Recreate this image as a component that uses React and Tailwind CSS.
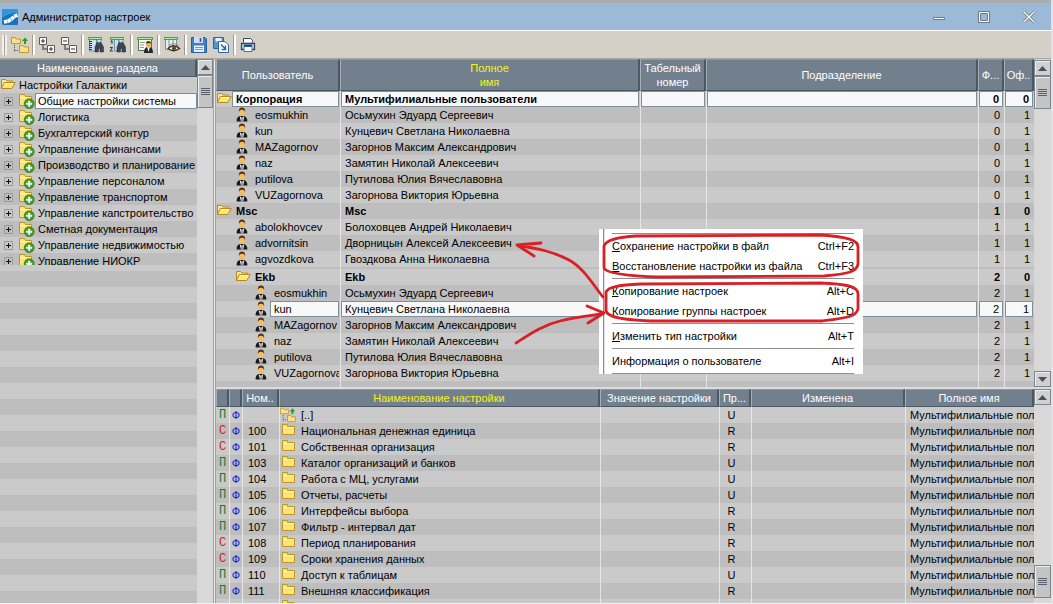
import React from "react";
import clsx from "clsx";

const sections = [
  "Общие настройки системы",
  "Логистика",
  "Бухгалтерский контур",
  "Управление финансами",
  "Производство и планирование",
  "Управление персоналом",
  "Управление транспортом",
  "Управление капстроительство",
  "Сметная документация",
  "Управление недвижимостью",
  "Управление НИОКР",
];

const users = [
  { level: 0, group: true, login: "Корпорация", name: "Мультифилиальные пользователи", f: 0, o: 0, selected: true },
  { level: 1, login: "eosmukhin", name: "Осьмухин Эдуард Сергеевич", f: 0, o: 1 },
  { level: 1, login: "kun", name: "Кунцевич Светлана Николаевна", f: 0, o: 1 },
  { level: 1, login: "MAZagornov", name: "Загорнов Максим Александрович", f: 0, o: 1 },
  { level: 1, login: "naz", name: "Замятин Николай Алексеевич", f: 0, o: 1 },
  { level: 1, login: "putilova", name: "Путилова Юлия Вячеславовна", f: 0, o: 1 },
  { level: 1, login: "VUZagornova", name: "Загорнова Виктория Юрьевна", f: 0, o: 1 },
  { level: 0, group: true, login: "Msc", name: "Msc", f: 1, o: 0 },
  { level: 1, login: "abolokhovcev", name: "Болоховцев Андрей Николаевич", f: 1, o: 1 },
  { level: 1, login: "advornitsin", name: "Дворницын Алексей Алексеевич", f: 1, o: 1 },
  { level: 1, login: "agvozdkova", name: "Гвоздкова Анна Николаевна", f: 1, o: 1 },
];

const branchUsers = [
  { level: 1, group: true, login: "Ekb", name: "Ekb", f: 2, o: 0 },
  { level: 2, login: "eosmukhin", name: "Осьмухин Эдуард Сергеевич", f: 2, o: 1 },
  { level: 2, login: "kun", name: "Кунцевич Светлана Николаевна", f: 2, o: 1, selected: true },
  { level: 2, login: "MAZagornov", name: "Загорнов Максим Александрович", f: 2, o: 1 },
  { level: 2, login: "naz", name: "Замятин Николай Алексеевич", f: 2, o: 1 },
  { level: 2, login: "putilova", name: "Путилова Юлия Вячеславовна", f: 2, o: 1 },
  { level: 2, login: "VUZagornova", name: "Загорнова Виктория Юрьевна", f: 2, o: 1 },
];

const settings = [
  ["П", "", "[..]", "U"],
  ["С", "100", "Национальная денежная единица", "R"],
  ["С", "101", "Собственная организация", "R"],
  ["П", "103", "Каталог организаций и банков", "U"],
  ["П", "104", "Работа с МЦ, услугами", "U"],
  ["П", "105", "Отчеты, расчеты", "U"],
  ["П", "106", "Интерфейсы выбора", "R"],
  ["П", "107", "Фильтр - интервал дат", "R"],
  ["С", "108", "Период планирования", "R"],
  ["С", "109", "Сроки хранения данных", "R"],
  ["П", "110", "Доступ к таблицам", "U"],
  ["П", "111", "Внешняя классификация", "R"],
];

function Logo() {
  return (
    <svg className="size-4 shrink-0" viewBox="0 0 16 16">
      <rect width="16" height="16" rx="1.5" fill="#1873bb" />
      <path d="M0 2Q0 0 2 0H14Q16 0 16 2V4Q7 4 0 9Z" fill="#3197dc" />
      <path d="M2 13 6 12.2 9.5 10 12 7.5 15.5 6" fill="none" stroke="#fff" strokeWidth="3.6" strokeDasharray="3.5 .5" />
    </svg>
  );
}

function OpenFolder() {
  return (
    <svg className="size-4 shrink-0" viewBox="0 0 16 16">
      <path d="M1.5 11V2.5H5.5L7 4H12.5V6" fill="#f7e9a0" stroke="#b88a1c" />
      <path d="M1.5 11.5 4.2 5.5H15.2L11.8 11.5Z" fill="#ffe778" stroke="#b88a1c" />
      <path d="M5 6.5H13.5" stroke="#fff7c4" />
    </svg>
  );
}

function Folder() {
  return (
    <svg className="size-4 shrink-0" viewBox="0 0 16 16">
      <path d="M2.5 1.5H7.5V3.5H14.5V11.5H2.5Z" fill="#fbe47c" stroke="#c39422" />
      <path d="M3 4.5H14" stroke="#fff8cf" />
    </svg>
  );
}

function FolderPlus() {
  return (
    <svg className="size-4 shrink-0" viewBox="0 0 16 16">
      <path d="M.5 1.5H5.5L6.5 3.5H12.5V12.5H.5Z" fill="#fbe47c" stroke="#c39422" />
      <path d="M1.5 4.5H11.5" stroke="#fff8cf" />
      <circle cx="10.2" cy="10.7" r="5" fill="#409b20" stroke="#2c7811" strokeWidth=".6" />
      <path d="M10.2 7.7V13.7M7.2 10.7H13.2" stroke="#fff" strokeWidth="2" />
    </svg>
  );
}

function FolderUp({ className }) {
  return (
    <svg className={className} viewBox="0 0 18 18">
      <path d="M.5 1.5H4L5 3H9.5V7.5H.5ZM8.5 9.5H12L13 11H17.5V16.5H8.5Z" fill="#fbe08a" stroke="#c9962c" />
      <path d="M3.5 9V16M3.5 14.5H8" fill="none" stroke="#444" strokeDasharray="1 1.2" />
      <path d="M14 8V4" stroke="#2f9a1c" strokeWidth="2" />
      <path d="M11 5 14 1.5 17 5Z" fill="#2f9a1c" />
    </svg>
  );
}

function UserIcon() {
  return (
    <svg className="size-4 shrink-0" viewBox="0 0 16 16">
      <path d="M1.6 14.5Q1.4 10 4.5 9H9Q12.4 10 12.4 14.5Z" fill="#17191c" />
      <path d="M4.6 9 7 11 9.2 9 8.2 14.5H6Z" fill="#fff" />
      <path d="M6.5 10.5H7.5L7.9 14.5H6.1Z" fill="#6d7986" />
      <ellipse cx="7" cy="5.2" rx="3" ry="3.9" fill="#f0bd69" />
      <path d="M3.8 5Q3.6 .6 7 .6T10.2 5Q9.4 2.7 7 2.8T3.8 5Z" fill="#5a3514" />
    </svg>
  );
}

function Binoculars() {
  return (
    <path
      d="M8 16V11L10 6.5H11.5V9H12.5V6.5H14L16.5 11V16H13V12.5H11.5V16Z"
      fill="#3d4650"
      stroke="#20262c"
      strokeWidth=".5"
    />
  );
}

const tools = [
  { label: "Вверх", sep: true, icon: <FolderUp className="size-[18px]" /> },
  {
    label: "Развернуть",
    icon: (
      <svg className="size-[18px]" viewBox="0 0 18 18" fill="#fff" stroke="#5b5b5b">
        <path d="M1.5 1.5H8.5V8.5H1.5ZM9.5 9.5H16.5V16.5H9.5Z" />
        <path d="M3 5H7M5 3V7M11 13H15M13 11V15M5 9V14M6 13H9" stroke="#333" />
      </svg>
    ),
  },
  {
    label: "Свернуть",
    sep: true,
    icon: (
      <svg className="size-[18px]" viewBox="0 0 18 18" fill="#fff" stroke="#5b5b5b">
        <path d="M1.5 1.5H8.5V8.5H1.5ZM9.5 9.5H16.5V16.5H9.5Z" />
        <path d="M3 5H7M11 13H15M5 9V14M6 13H9" stroke="#333" />
      </svg>
    ),
  },
  {
    label: "Найти",
    icon: (
      <svg className="size-[18px]" viewBox="0 0 18 18">
        <path d="M2.5 3V15H9.5V3M10 3V8H14V3" fill="#c9def3" stroke="#6d91b7" />
        <path d="M2 5.5H5M2 7.5H5M2 9.5H5M2 11.5H5M2 13.5H5" stroke="#333" />
        <path d="M1.5 1.5H14.5V3.5H1.5Z" fill="#b6f29c" stroke="#43a52b" />
        <Binoculars />
      </svg>
    ),
  },
  {
    label: "Найти далее",
    sep: true,
    icon: (
      <svg className="size-[18px]" viewBox="0 0 18 18">
        <path d="M5.5 4V15H9.5V4M10 3V8H14V3" fill="#c9def3" stroke="#6d91b7" />
        <path d="M1.5 5.5 3 4.5V8M1 11.5H3.5L1 15H4" fill="none" stroke="#333" />
        <path d="M1.5 1.5H14.5V3.5H1.5Z" fill="#b6f29c" stroke="#43a52b" />
        <Binoculars />
      </svg>
    ),
  },
  {
    label: "Пользователь",
    sep: true,
    icon: (
      <svg className="size-[18px]" viewBox="0 0 18 18">
        <path d="M2.5 3H15.5V14.5H2.5Z" fill="#f8fbf6" stroke="#52764b" />
        <path d="M1.5 1.5H16.5V3.5H1.5Z" fill="#b6f29c" stroke="#43a52b" />
        <path d="M4 6.5H9M4 9H8M4 11.5H8" stroke="#8e989b" />
        <path d="M8 17Q8 12 11 11H14Q17 12 17 17Z" fill="#23262b" />
        <path d="M11 11 12.5 16 14 11Z" fill="#fff" />
        <ellipse cx="12.5" cy="8.4" rx="2.5" ry="3" fill="#e7af5c" />
        <path d="M10 7.5Q10 5 12.5 5T15 7.5Q13 6.3 10 7.5" fill="#54310e" />
      </svg>
    ),
  },
  {
    label: "Просмотр",
    sep: true,
    icon: (
      <svg className="size-[18px]" viewBox="0 0 18 18">
        <path d="M2.5 3V13.5H13.5V3M6 3V13M10 3V13" fill="#e5f0fb" stroke="#6d91b7" />
        <path d="M1.5 1.5H14.5V3.5H1.5Z" fill="#b6f29c" stroke="#43a52b" />
        <path d="M5 12.5Q10.5 7 16.5 12.5Q10.5 17 5 12.5Z" fill="#fff" stroke="#42311b" strokeWidth="1.4" />
        <circle cx="11" cy="12.3" r="2.1" fill="#604425" />
        <path d="M6 9.5Q11 5.5 16 10" fill="none" stroke="#b28854" />
      </svg>
    ),
  },
  {
    label: "Сохранить",
    icon: (
      <svg className="size-[18px]" viewBox="0 0 18 18">
        <path d="M1.5 1.5H15L16.5 3V16.5H1.5Z" fill="#3f80c4" stroke="#245f9e" />
        <path d="M4 1H13V7H4Z" fill="#cfdff0" />
        <path d="M4 9.5H14V16H4Z" fill="#e9f1fa" />
        <path d="M10.5 2V6" stroke="#2f5d92" strokeWidth="1.6" />
        <path d="M5 11.5H13M5 13.5H13" stroke="#7b96b3" />
      </svg>
    ),
  },
  {
    label: "Копировать",
    sep: true,
    icon: (
      <svg className="size-[18px]" viewBox="0 0 18 18">
        <path d="M1.5 1.5H11.5V12.5H1.5Z" fill="#5794d3" stroke="#2867a6" />
        <path d="M3.5 2H9.5V5.5H3.5Z" fill="#e9f1fa" />
        <path d="M6.5 5.5H13L16.5 9V16.5H6.5Z" fill="#fff" stroke="#2867a6" />
        <path d="M9 8.5 13.5 13M13.5 9.5V13.5H9.5" fill="none" stroke="#2867a6" strokeWidth="1.5" />
      </svg>
    ),
  },
  {
    label: "Печать",
    icon: (
      <svg className="size-[18px]" viewBox="0 0 18 18">
        <path d="M4.5 6.5V2.5H11.5L13.5 4.5V6.5" fill="#fff" stroke="#33475c" />
        <path d="M2.5 7.5H15.5V13.5H2.5Z" fill="#c6d6e8" stroke="#33475c" strokeWidth="1.3" />
        <path d="M5 10.5H13V15.5H5Z" fill="#fff" stroke="#2a78c8" />
        <path d="M5 9.5H13" stroke="#243345" strokeWidth="1.5" />
      </svg>
    ),
  },
];

function ScrollButton({ down }) {
  return (
    <button
      aria-label={down ? "Прокрутить вниз" : "Прокрутить вверх"}
      className="flex h-4 w-full shrink-0 items-center justify-center border border-[#7d8690] bg-[#d0d0d0] shadow-[inset_1px_1px_0_#eeeeee]"
    >
      <svg className="h-[5px] w-[9px]" viewBox="0 0 9 5" fill="#48525d">
        <path d={down ? "M0 0H9L4.5 5Z" : "M0 5H9L4.5 0Z"} />
      </svg>
    </button>
  );
}

function Thumb() {
  return (
    <div className="flex h-[33px] w-full shrink-0 items-center justify-center border border-[#7d8690] bg-[#c4c4c4] shadow-[inset_1px_1px_0_#eeeeee]">
      <svg className="h-2 w-[9px]" viewBox="0 0 9 8" stroke="#58616b">
        <path d="M0 .5H9M0 2.5H9M0 4.5H9M0 6.5H9" />
      </svg>
    </div>
  );
}

function Th({ children, className }) {
  return (
    <th
      scope="col"
      className={clsx(
        "overflow-hidden border-t border-r-2 border-b border-l border-t-[#8f9aa5] border-r-[#4b5865] border-b-[#4b5865] border-l-[#a5adb6] bg-[#727f8d] p-0 font-normal whitespace-nowrap",
        className
      )}
    >
      {children}
    </th>
  );
}

const cell = "h-4 overflow-hidden border-l border-[#e6e6e6] p-0 leading-4 whitespace-nowrap";
const box = "mr-px h-4 overflow-hidden border border-[#7f8c9a] bg-[#f8f8f8] leading-[14px]";

function UserRow({ user }) {
  const plain = "h-4 overflow-hidden border border-transparent leading-[14px]";
  const inner = user.selected ? box : plain;
  return (
    <tr className={clsx("odd:bg-[#cacaca] even:bg-[#bebebe]", user.group && "font-bold")}>
      <td className="h-4 overflow-hidden p-0 whitespace-nowrap">
        <div className={clsx("flex", user.level === 1 && "pl-[19px]", user.level === 2 && "pl-[38px]")}>
          {user.group ? <OpenFolder /> : <UserIcon />}
          <div className={clsx(inner, "min-w-0 flex-1 pl-[3px]")}>{user.login}</div>
        </div>
      </td>
      <td className={cell}>
        <div className={clsx(inner, "pl-[3px]")}>{user.name}</div>
      </td>
      <td className={cell}>
        <div className={inner} />
      </td>
      <td className={cell}>
        <div className={inner} />
      </td>
      <td className={cell}>
        <div className={clsx(inner, "pr-[3px] text-right")}>{user.f}</div>
      </td>
      <td className={cell}>
        <div className={clsx(inner, "pr-[3px] text-right")}>{user.o}</div>
      </td>
    </tr>
  );
}

function GapRow({ className }) {
  return (
    <tr className="bg-[#bebebe]">
      <td className={clsx("p-0", className)} />
      {[1, 2, 3, 4, 5].map((i) => (
        <td key={i} className="border-l border-[#e6e6e6] p-0" />
      ))}
    </tr>
  );
}

function UserTable() {
  return (
    <table className="w-full table-fixed border-separate border-spacing-0">
      <colgroup>
        <col className="w-[124px]" />
        <col className="w-[300px]" />
        <col className="w-[66px]" />
        <col />
        <col className="w-[26px]" />
        <col className="w-[30px]" />
      </colgroup>
      <thead className="text-white">
        <tr className="h-8 leading-[14px]">
          <Th>Пользователь</Th>
          <Th className="text-[#f4f41c]">Полное<br />имя</Th>
          <Th>Табельный<br />номер</Th>
          <Th>Подразделение</Th>
          <Th>Ф...</Th>
          <Th>Оф..</Th>
        </tr>
      </thead>
      <tbody>
        {users.map((u) => (
          <UserRow key={u.login} user={u} />
        ))}
      </tbody>
      <tbody>
        <GapRow className="h-[2px]" />
      </tbody>
      <tbody>
        {branchUsers.map((u) => (
          <UserRow key={u.login} user={u} />
        ))}
      </tbody>
      <tbody>
        <GapRow className="h-[6px]" />
      </tbody>
    </table>
  );
}

function SettingsTable() {
  return (
    <table className="w-full table-fixed border-separate border-spacing-0">
      <colgroup>
        <col className="w-[13px]" />
        <col className="w-[13px]" />
        <col className="w-[37px]" />
        <col />
        <col className="w-[119px]" />
        <col className="w-8" />
        <col className="w-[154px]" />
        <col className="w-[129px]" />
      </colgroup>
      <thead className="text-white">
        <tr className="h-[18px] leading-4">
          <Th />
          <Th />
          <Th>Ном..</Th>
          <Th className="text-[#f4f41c]">Наименование настройки</Th>
          <Th>Значение настройки</Th>
          <Th>Пр...</Th>
          <Th>Изменена</Th>
          <Th>Полное имя</Th>
        </tr>
      </thead>
      <tbody>
        {settings.map(([kind, num, title, mode]) => (
          <tr key={title} className="odd:bg-[#cacaca] even:bg-[#bebebe]">
            <td
              className={clsx(
                "h-4 p-0 text-center font-['Liberation_Mono',monospace] text-xs leading-4",
                kind === "С" ? "text-[#d81b1b]" : "text-[#1d7a24]"
              )}
            >
              {kind}
            </td>
            <td className={clsx(cell, "text-center text-[#1414d2]")}>Ф</td>
            <td className={clsx(cell, "pl-[5px]")}>{num}</td>
            <td className={cell}>
              <div className="flex gap-[5px]">
                {num ? <Folder /> : <FolderUp className="size-4 shrink-0" />}
                {title}
              </div>
            </td>
            <td className={cell} />
            <td className={clsx(cell, "pr-2 text-center")}>{mode}</td>
            <td className={cell} />
            <td className={clsx(cell, "pl-1")}>Мультифилиальные пользователи</td>
          </tr>
        ))}
        <tr className="bg-[#cacaca]">
          <td className="h-4 p-0" />
          <td className={cell} />
          <td className={cell} />
          <td className={cell}>
            <Folder />
          </td>
          <td className={cell} />
          <td className={cell} />
          <td className={cell} />
          <td className={cell} />
        </tr>
      </tbody>
    </table>
  );
}

function MenuItem({ hot, text, keys }) {
  return (
    <button role="menuitem" className="flex h-5 w-full items-center justify-between">
      <span>
        {hot && <u>{hot}</u>}
        {text}
      </span>
      <span>{keys}</span>
    </button>
  );
}

function MenuLine() {
  return <div role="separator" className="my-[2px] h-px bg-[#8e8e8e]" />;
}

function ContextMenu() {
  return (
    <div role="menu" className="absolute top-[170px] left-[383px] flex h-[145px] w-[264px] overflow-hidden bg-white pr-[9px] pl-1">
      <div className="mr-[7px] w-[2px] shrink-0 border-l border-[#8e8e8e] bg-[#e0e0e0]" />
      <div className="flex-1 pt-[2px]">
        <MenuLine />
        <MenuItem hot="С" text="охранение настройки в файл" keys="Ctrl+F2" />
        <MenuItem hot="В" text="осстановление настройки из файла" keys="Ctrl+F3" />
        <MenuLine />
        <MenuItem hot="К" text="опирование настроек" keys="Alt+C" />
        <MenuItem text="Копирование группы настроек" keys="Alt+D" />
        <MenuLine />
        <MenuItem hot="И" text="зменить тип настройки" keys="Alt+T" />
        <MenuLine />
        <MenuItem text="Информация о пользователе" keys="Alt+I" />
        <MenuLine />
      </div>
    </div>
  );
}

// Hand-drawn marks around the menu
function Marks() {
  return (
    <svg
      className="pointer-events-none absolute top-[166px] left-[294px] h-[155px] w-[360px]"
      viewBox="510 225 360 155"
      fill="none"
      stroke="#d92027"
      strokeWidth="2.8"
      strokeLinecap="round"
      strokeLinejoin="round"
    >
      <path d="M636 236 820 235C848 237 858 240 858 247V264C857 272 847 274 824 276L660 277C626 276 606 273 604 268V246C606 239 620 237 636 236Z" />
      <path d="M640 284 820 283C846 284 858 286 858 294V309C856 317 846 318 822 321L650 321C626 320 608 318 606 311V292C609 286 622 285 640 284Z" />
      <path d="M603 297C594 286 584 268 569 260C554 252 540 249 517 245M541 243 517 245 534 256" />
      <path d="M516 343C530 334 543 325 560 321C575 317 590 316 604 313M587 306 604 313 588 323" />
    </svg>
  );
}

function SectionTree() {
  return (
    <nav className="flex w-[197px] shrink-0 flex-col overflow-hidden">
      <div className="flex h-[18px] shrink-0 items-center justify-center border-t border-r-2 border-b border-t-[#8f9aa5] border-r-[#4b5865] border-b-[#4b5865] bg-[#727f8d] text-white">
        Наименование раздела
      </div>
      <div className="flex h-4 shrink-0 items-center gap-[3px] bg-[#cacaca]">
        <OpenFolder />
        Настройки Галактики
      </div>
      <ul className="shrink-0">
        {sections.map((title, i) => (
          <li
            key={title}
            className="flex h-4 items-start overflow-hidden whitespace-nowrap last:h-3 odd:bg-[#bebebe] even:bg-[#cacaca]"
          >
            <button aria-label="Развернуть" className="mt-[4px] mr-[6px] ml-1 size-[9px] shrink-0">
              <svg viewBox="0 0 9 9" fill="none">
                <path d="M.5 .5H8.5V8.5H.5Z" stroke="#9a9a9a" />
                <path d="M2 4.5H7M4.5 2V7" stroke="#111" />
              </svg>
            </button>
            <FolderPlus />
            <span
              className={clsx(
                "h-4 flex-1 border pl-[2px] leading-[14px]",
                i === 0 ? "border-[#7f8c9a] bg-[#f8f8f8]" : "border-transparent"
              )}
            >
              {title}
            </span>
          </li>
        ))}
      </ul>
      <div className="h-[6px] shrink-0 bg-[#cacaca]" />
      <div className="flex-1 bg-[repeating-linear-gradient(#bebebe_0_16px,#cacaca_16px_32px)]" />
    </nav>
  );
}

export default function App() {
  return (
    <div className="flex h-screen flex-col overflow-hidden border-r-2 border-b border-r-[#e2e2e0] border-b-[#f2f2f2] bg-[#d8d8d8] font-['Liberation_Sans',Arial,sans-serif] text-[11px] leading-4 text-black">
      <header className="flex h-[31px] shrink-0 items-center border-t-[3px] border-b border-t-[#abacae] border-b-white bg-[#9db9d8] pr-4 pl-[2px]">
        <Logo />
        <h1 className="ml-1 flex-1">Администратор настроек</h1>
        <div className="flex gap-[33px]">
          <button aria-label="Свернуть окно">
            <svg className="size-3" viewBox="0 0 12 12">
              <path d="M.5 6.5H11.5V8.5H.5Z" fill="#fff" stroke="#6d7b89" />
            </svg>
          </button>
          <button aria-label="Развернуть окно">
            <svg className="size-3" viewBox="0 0 12 12" fill="none">
              <path d="M1.5 1.5H10.5V10.5H1.5Z" stroke="#fff" />
              <path d="M.5 .5H11.5V11.5H.5ZM2.5 2.5H9.5V9.5H2.5Z" stroke="#6d7b89" />
            </svg>
          </button>
          <button aria-label="Закрыть">
            <svg className="size-3" viewBox="0 0 12 12" strokeWidth="3">
              <path d="M1 1 11 11M11 1 1 11" stroke="#6d7b89" />
              <path d="M1 1 11 11M11 1 1 11" stroke="#fff" strokeWidth="1.3" />
            </svg>
          </button>
        </div>
      </header>

      <div role="toolbar" className="flex h-7 shrink-0 items-center border-b border-[#a9a699] bg-[#d4d0c8] pl-[2px]">
        <div className="mr-[2px] h-5 w-[5px] border-x-2 border-[#f2f1ed] bg-[#a5a297]" />
        {tools.map((t) => (
          <React.Fragment key={t.label}>
            <button aria-label={t.label} className="flex w-[22px] justify-center">
              {t.icon}
            </button>
            {t.sep && <span className="mx-px h-5 w-[3px] border-l border-[#9e9b90] bg-white" />}
          </React.Fragment>
        ))}
      </div>

      <main className="flex min-h-0 flex-1">
        <SectionTree />
        <div className="flex w-4 shrink-0 flex-col bg-[#d8d8d8]">
          <ScrollButton />
          <Thumb />
        </div>
        <div className="w-[3px] shrink-0 border-x border-[#a3a397] bg-[#e8e8e6]" />

        <div className="flex min-w-0 flex-1 flex-col">
          <section className="relative flex shrink-0 border-b-2 border-[#dcdcdc]">
            <div className="min-w-0 flex-1">
              <UserTable />
            </div>
            <div className="flex w-[17px] shrink-0 flex-col pt-px">
              <ScrollButton />
              <Thumb />
              <div className="flex-1" />
              <ScrollButton down />
            </div>
            <ContextMenu />
            <Marks />
          </section>

          <section className="flex min-h-0 flex-1 overflow-hidden">
            <div className="min-w-0 flex-1">
              <SettingsTable />
            </div>
            <div className="flex w-[17px] shrink-0 flex-col pb-[5px]">
              <ScrollButton />
              <div className="flex-1" />
              <Thumb />
            </div>
          </section>
        </div>
      </main>
    </div>
  );
}
